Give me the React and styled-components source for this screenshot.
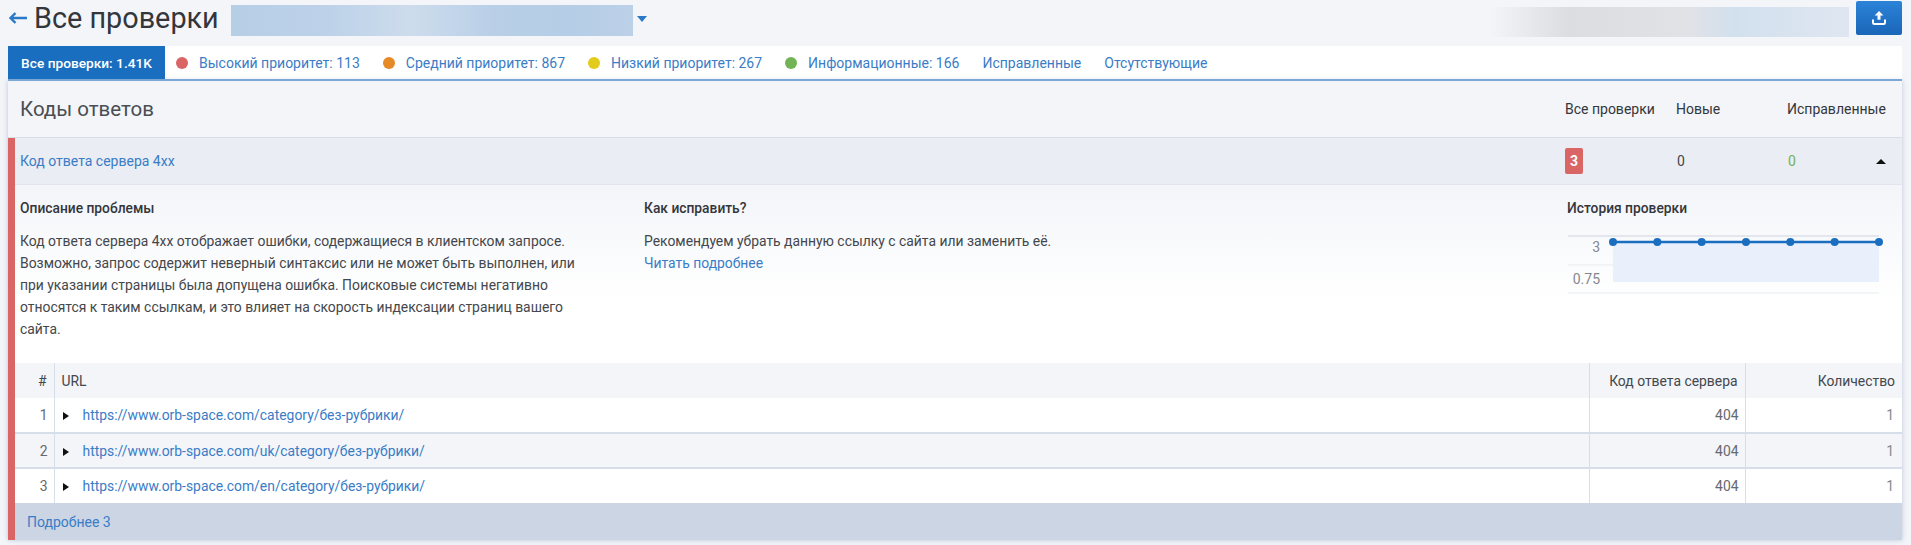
import React from "react";
import styled, { createGlobalStyle } from "styled-components";

const GlobalStyle = createGlobalStyle`
  html, body {
    margin: 0;
    background: #f3f5f9;
    font-family: Roboto, "Noto Sans", sans-serif;
    color: #3c3f44;
  }
  * { box-sizing: border-box; }
`;

const tabs = [
  { label: "Высокий приоритет: 113", dot: "#d96565" },
  { label: "Средний приоритет: 867", dot: "#e58a26" },
  { label: "Низкий приоритет: 267", dot: "#e3cb1e" },
  { label: "Информационные: 166", dot: "#72b356" },
  { label: "Исправленные" },
  { label: "Отсутствующие" },
];

const rows = [
  "https://www.orb-space.com/category/без-рубрики/",
  "https://www.orb-space.com/uk/category/без-рубрики/",
  "https://www.orb-space.com/en/category/без-рубрики/",
];

function HistoryChart() {
  const xs = [0, 1, 2, 3, 4, 5, 6].map((i) => 45 + i * 44.33);
  return (
    <ChartSvg width="325" height="62" viewBox="0 0 325 62">
      <line x1="0" y1="1" x2="311" y2="1" stroke="#e3e6ec" strokeWidth="2" />
      <line x1="0" y1="30" x2="311" y2="30" stroke="#e9ebf0" />
      <line x1="0" y1="58" x2="311" y2="58" stroke="#e9ebf0" />
      <rect x="45" y="7" width="266" height="40" fill="#e9f0fc" />
      <line x1="45" y1="7" x2="311" y2="7" stroke="#1a6ebf" strokeWidth="2.5" />
      {xs.map((x) => (
        <circle key={x} cx={x} cy="7" r="4" fill="#1a6ebf" />
      ))}
      <text x="32" y="17" textAnchor="end" fontSize="14" fill="#85888e" fontFamily="Roboto">3</text>
      <text x="32" y="49" textAnchor="end" fontSize="14" fill="#85888e" fontFamily="Roboto">0.75</text>
    </ChartSvg>
  );
}

export default function App() {
  return (
    <Page>
      <GlobalStyle />
      <TopBar>
        <svg width="20" height="14" viewBox="0 0 20 14">
          <path d="M19 7H2.5M7.5 2L2.5 7l5 5" fill="none" stroke="#2a78c8" strokeWidth="2.4" />
        </svg>
        <Title>Все проверки</Title>
        <BlurredName />
        <Caret />
        <BlurredUrl />
        <ExportButton>
          <svg width="16" height="16" viewBox="0 0 16 16">
            <path d="M8 1L3.6 5.6h2.9v4.2h3V5.6h2.9z" fill="#fff" />
            <path d="M2 9.5v3.2c0 .8.6 1.3 1.3 1.3h9.4c.7 0 1.3-.5 1.3-1.3V9.5" fill="none" stroke="#fff" strokeWidth="2" />
          </svg>
        </ExportButton>
      </TopBar>

      <TabBar>
        <ActiveTab>Все проверки: 1.41K</ActiveTab>
        {tabs.map((t) => (
          <Tab key={t.label}>
            {t.dot && <Dot $color={t.dot} />}
            {t.label}
          </Tab>
        ))}
      </TabBar>

      <Panel>
        <PanelHead>
          <PanelTitle>Коды ответов</PanelTitle>
          <ColumnLabels>
            <span>Все проверки</span>
            <span>Новые</span>
            <span>Исправленные</span>
          </ColumnLabels>
        </PanelHead>

        <Issue>
          <IssueRow>
            <IssueLink>Код ответа сервера 4xx</IssueLink>
            <IssueCounts>
              <Badge>3</Badge>
              <NewCount>0</NewCount>
              <FixedCount>0</FixedCount>
              <CaretUp />
            </IssueCounts>
          </IssueRow>

          <Details>
            <Description>
              <DetailHead>Описание проблемы</DetailHead>
              <Paragraph>
                Код ответа сервера 4xx отображает ошибки, содержащиеся в клиентском запросе.
                Возможно, запрос содержит неверный синтаксис или не может быть выполнен, или
                при указании страницы была допущена ошибка. Поисковые системы негативно
                относятся к таким ссылкам, и это влияет на скорость индексации страниц вашего
                сайта.
              </Paragraph>
            </Description>
            <HowTo>
              <DetailHead>Как исправить?</DetailHead>
              <Paragraph>
                Рекомендуем убрать данную ссылку с сайта или заменить её.
                <br />
                <TextLink>Читать подробнее</TextLink>
              </Paragraph>
            </HowTo>
            <History>
              <DetailHead>История проверки</DetailHead>
              <HistoryChart />
            </History>
          </Details>

          <Table>
            <thead>
              <tr>
                <HeadCell $w={39} $right>#</HeadCell>
                <HeadCell>URL</HeadCell>
                <HeadCell $w={156} $right>Код ответа сервера</HeadCell>
                <HeadCell $w={157} $right $last>Количество</HeadCell>
              </tr>
            </thead>
            <tbody>
              {rows.map((url, i) => (
                <BodyRow key={url} $odd={i % 2 === 1}>
                  <NumCell>{i + 1}</NumCell>
                  <UrlCell>
                    <RowCaret />
                    <TextLink>{url}</TextLink>
                  </UrlCell>
                  <NumCell>404</NumCell>
                  <CountCell>1</CountCell>
                </BodyRow>
              ))}
            </tbody>
          </Table>

          <MoreBar>Подробнее 3</MoreBar>
        </Issue>
      </Panel>
    </Page>
  );
}

const Page = styled.div`
  width: 1911px;
  height: 545px;
  padding: 0 9px 0 8px;
  overflow: hidden;
`;

const TopBar = styled.div`
  height: 36px;
  margin-bottom: 10px;
  display: flex;
  align-items: center;
`;

const Title = styled.h1`
  margin: 0 12px 0 6px;
  font-size: 28.8px;
  font-weight: 400;
  color: #33363b;
  white-space: nowrap;
`;

const BlurredName = styled.div`
  width: 402px;
  height: 31px;
  margin-top: 5px;
  background: linear-gradient(90deg, #b7cee7 0%, #bdd2e9 25%, #cddcec 45%, #b9cfe8 65%, #b5cde6 85%, #bcd1e8 100%);
`;

const Caret = styled.div`
  margin: 2px 0 0 4px;
  width: 0;
  height: 0;
  border-left: 5px solid transparent;
  border-right: 5px solid transparent;
  border-top: 6px solid #2a78c8;
`;

const BlurredUrl = styled.div`
  margin: 8px 7px 0 auto;
  width: 360px;
  height: 30px;
  background: linear-gradient(90deg, #f3f5f9 0%, #dcdde0 22%, #e1e2e6 55%, #d2e0ee 68%, #dfe6f1 100%);
`;

const ExportButton = styled.button`
  width: 46px;
  height: 34px;
  border: 0;
  border-radius: 2px;
  background: linear-gradient(180deg, #2b83d8, #1a66b8);
  display: flex;
  align-items: center;
  justify-content: center;
  padding: 0;
`;

const TabBar = styled.div`
  height: 35px;
  background: #fff;
  border-bottom: 2px solid #78a9dc;
  display: flex;
  align-items: stretch;
  font-size: 14px;
`;

const ActiveTab = styled.div`
  width: 157px;
  background: #1a6ebf;
  color: #fff;
  font-size: 13.7px;
  font-weight: 500;
  display: flex;
  align-items: center;
  justify-content: center;
  white-space: nowrap;
`;

const Tab = styled.div`
  margin-left: 23px;
  color: #3a7cc6;
  display: flex;
  align-items: center;
  white-space: nowrap;
  &:nth-child(2) { margin-left: 11px; }
`;

const Dot = styled.span`
  width: 12px;
  height: 12px;
  border-radius: 50%;
  background: ${(p) => p.$color};
  margin-right: 11px;
`;

const Panel = styled.div`
  background: #f3f5f9;
  box-shadow: 0 0 5px rgba(140, 160, 195, 0.55);
`;

const PanelHead = styled.div`
  height: 57px;
  padding-left: 12px;
  display: flex;
  align-items: center;
  justify-content: space-between;
  border-bottom: 1px solid #d6deea;
`;

const PanelTitle = styled.h2`
  margin: 0;
  font-size: 20.5px;
  font-weight: 400;
  color: #4a4d52;
`;

const ColumnLabels = styled.div`
  display: grid;
  grid-template-columns: 111px 111px 115px;
  font-size: 14px;
  color: #33363b;
  white-space: nowrap;
`;

const Issue = styled.div`
  border-left: 7px solid #d96565;
`;

const IssueRow = styled.div`
  height: 47px;
  padding-left: 5px;
  background: #eaedf3;
  border-bottom: 1px solid #e0e5ee;
  display: flex;
  align-items: center;
  justify-content: space-between;
`;

const IssueLink = styled.a`
  font-size: 14px;
  color: #3a7cc6;
`;

const IssueCounts = styled.div`
  display: grid;
  grid-template-columns: 111px 111px 89px 26px;
  align-items: center;
  font-size: 14px;
`;

const Badge = styled.span`
  width: 18px;
  height: 26px;
  border-radius: 2px;
  background: #d96565;
  color: #fff;
  font-weight: 700;
  font-size: 14px;
  display: flex;
  align-items: center;
  justify-content: center;
`;

const NewCount = styled.span`
  padding-left: 1px;
  color: #44474c;
`;

const FixedCount = styled.span`
  padding-left: 1px;
  color: #72b356;
`;

const CaretUp = styled.span`
  width: 0;
  height: 0;
  border-left: 5px solid transparent;
  border-right: 5px solid transparent;
  border-bottom: 5px solid #111;
`;

const Details = styled.div`
  height: 178px;
  padding: 14px 0 0 5px;
  display: grid;
  grid-template-columns: 624px 923px 1fr;
  background: linear-gradient(180deg, #f3f5f9 0%, #ffffff 65%);
`;

const Description = styled.div`
  width: 565px;
`;

const HowTo = styled.div``;

const History = styled.div``;

const DetailHead = styled.div`
  font-size: 13.8px;
  line-height: 18px;
  font-weight: 500;
  color: #33363b;
  margin-bottom: 13px;
`;

const Paragraph = styled.div`
  font-size: 13.9px;
  line-height: 22px;
  color: #44474c;
`;

const TextLink = styled.a`
  color: #3a7cc6;
`;

const ChartSvg = styled.svg`
  display: block;
  margin: 18px 0 0 1px;
`;

const Table = styled.table`
  width: 100%;
  border-collapse: collapse;
  background: #fff;
  font-size: 13.9px;
  table-layout: fixed;
  tbody tr + tr td { border-top: 2px solid #d6deea; }
`;

const HeadCell = styled.th`
  ${(p) => p.$w && `width: ${p.$w}px;`}
  height: 35px;
  padding: 0 7px;
  background: #f3f5f9;
  font-weight: 400;
  color: #44474c;
  text-align: ${(p) => (p.$right ? "right" : "left")};
  border-right: ${(p) => (p.$last ? "0" : "1px solid #d6deea")};
`;

const BodyRow = styled.tr`
  background: ${(p) => (p.$odd ? "#f3f5f9" : "#fff")};
`;

const NumCell = styled.td`
  height: 35px;
  padding: 0 6px 0 7px;
  text-align: right;
  color: #66696e;
  border-right: 1px solid #d6deea;
`;

const CountCell = styled.td`
  padding: 0 8px;
  text-align: right;
  color: #85888e;
`;

const UrlCell = styled.td`
  padding: 0 0 0 8px;
  border-right: 1px solid #d6deea;
`;

const RowCaret = styled.span`
  display: inline-block;
  width: 0;
  height: 0;
  margin-right: 14px;
  border-top: 4.5px solid transparent;
  border-bottom: 4.5px solid transparent;
  border-left: 6px solid #111;
`;

const MoreBar = styled.div`
  height: 37px;
  padding-left: 12px;
  background: #cbd5e3;
  color: #3a7cc6;
  font-size: 14px;
  display: flex;
  align-items: center;
`;
